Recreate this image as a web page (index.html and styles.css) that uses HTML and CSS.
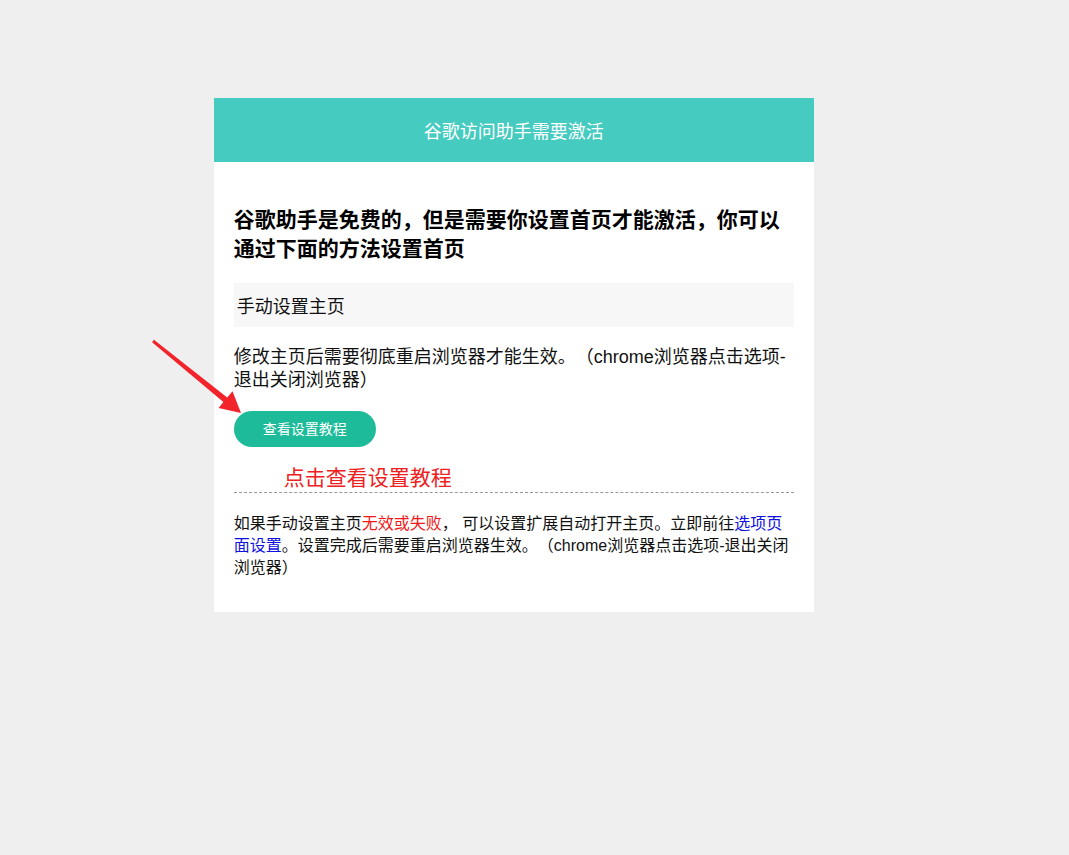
FILE: index.html
```html
<!DOCTYPE html>
<html lang="zh-CN">
<head>
<meta charset="utf-8">
<title>谷歌访问助手需要激活</title>
<link rel="stylesheet" href="styles.css">
</head>
<body>
<div class="card">
  <div class="card-header">谷歌访问助手需要激活</div>
  <div class="card-body">
    <h3 class="lead">谷歌助手是免费的，但是需要你设置首页才能激活，你可以通过下面的方法设置首页</h3>
    <div class="section-title">手动设置主页</div>
    <p class="note">修改主页后需要彻底重启浏览器才能生效。（chrome浏览器点击选项-退出关闭浏览器）</p>
    <a class="btn" href="#">查看设置教程</a>
    <div class="hint">点击查看设置教程</div>
    <p class="footer-text">如果手动设置主页<span class="warn">无效或失败</span>， 可以设置扩展自动打开主页。立即前往<a class="link" href="#">选项页面设置</a>。设置完成后需要重启浏览器生效。（chrome浏览器点击选项-退出关闭浏览器）</p>
  </div>
  <svg class="arrow" width="98" height="82" viewBox="0 0 98 82" aria-hidden="true">
    <polygon points="5.9,3.8 79.2,61.5 84.5,55.2 93,77 70.6,72.1 75.4,66.1 4.1,6.2" fill="#f3232b"/>
  </svg>
</div>
</body>
</html>
```
FILE: styles.css
```css
html, body {
  margin: 0;
  padding: 0;
}
body {
  background: #efefef;
  font-family: "Liberation Sans", "Noto Sans CJK SC", sans-serif;
  color: #111;
  text-spacing-trim: space-all;
}
.card {
  position: relative;
  width: 600px;
  margin: 98px 0 0 20%;
  background: #fff;
}
.card-header {
  height: 64px;
  background: #46cbc0;
  color: #fff;
  font-size: 18px;
  display: flex;
  align-items: center;
  justify-content: center;
}
.card-body {
  padding: 20px 20px 33px;
}
.lead {
  margin: 23px 0 20px;
  font-size: 21px;
  line-height: 29px;
  font-weight: bold;
  color: #000;
}
.section-title {
  height: 44px;
  background: #f7f7f7;
  padding: 0 3px;
  font-size: 18px;
  display: flex;
  align-items: center;
  color: #111;
}
.note {
  margin: 19px 0 19px;
  font-size: 18px;
  line-height: 23px;
  color: #111;
}
.btn {
  display: flex;
  align-items: center;
  justify-content: center;
  box-sizing: border-box;
  width: 142px;
  height: 36px;
  padding-bottom: 3px;
  border-radius: 18px;
  background: #1dbb9a;
  color: #fff;
  font-size: 14px;
  text-decoration: none;
}
.hint {
  margin-top: 17px;
  padding-left: 50px;
  height: 28px;
  line-height: 28px;
  font-size: 21px;
  color: #ee2020;
  border-bottom: 1px dashed #999;
}
.footer-text {
  margin: 20px 0 0;
  font-size: 16px;
  line-height: 22px;
  color: #111;
}
.warn {
  color: #f01818;
}
.link {
  color: #1010e0;
  text-decoration: none;
}
.arrow {
  position: absolute;
  left: -66px;
  top: 238px;
}
```
